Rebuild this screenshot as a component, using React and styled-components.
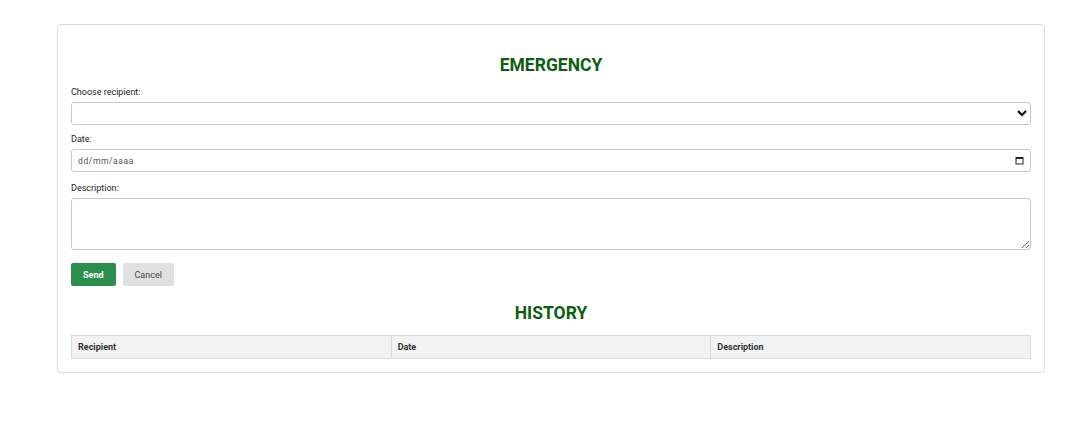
import React from 'react';
import styled, {createGlobalStyle} from 'styled-components';

const GlobalStyle = createGlobalStyle`
    body {
        margin: 0;
        background: #fff;
        font-family: Roboto, 'Liberation Sans', sans-serif;
        color: #222;
    }
`

const Card = styled.div`
    margin: 24px 31px 0 57px;
    padding: 13px;
    border: 1px solid #dcdcdc;
    border-radius: 4px;
    background: #fff;
`

const Title = styled.h2`
    margin: 17px 0 11px;
    font-size: 17.5px;
    line-height: 21px;
    font-weight: 700;
    text-align: center;
    color: #0c5f0e;
`

const Field = styled.div`
    margin-bottom: ${props => props.gap ?? 10}px;
`

const Label = styled.label`
    display: block;
    font-size: 9px;
    line-height: 11px;
    margin-bottom: 4px;
    color: #222;
`

const Select = styled.select`
    display: block;
    width: 100%;
    height: 23px;
    box-sizing: border-box;
    border: 1px solid #c8c8c8;
    border-radius: 3px;
    background: #fff;
    font-family: inherit;
    font-size: 10px;
`

const DateBox = styled.div`
    display: flex;
    align-items: center;
    height: 23px;
    box-sizing: border-box;
    padding: 0 6px;
    border: 1px solid #c8c8c8;
    border-radius: 3px;

    input {
        flex: 1;
        border: none;
        outline: none;
        padding: 0;
        font-family: inherit;
        font-size: 8.5px;
        letter-spacing: 0.6px;
        color: #333;
        background: transparent;
    }
    input::placeholder {
        color: #555;
    }
`

const TextArea = styled.textarea`
    display: block;
    width: 100%;
    height: 52px;
    box-sizing: border-box;
    border: 1px solid #c8c8c8;
    border-radius: 3px;
    font-family: inherit;
    font-size: 10px;
    resize: vertical;
`

const Buttons = styled.div`
    display: flex;
    gap: 7px;
`

const Button = styled.button`
    height: 23px;
    padding: 0 12px;
    border: none;
    border-radius: 2px;
    font-family: inherit;
    font-size: 9px;
    font-weight: ${props => props.primary ? 700 : 400};
    color: ${props => props.primary ? '#fff' : '#444'};
    background: ${props => props.primary ? '#2a8e4c' : '#e0e0e0'};
    cursor: pointer;
`

const Table = styled.table`
    width: 100%;
    border-collapse: collapse;
    table-layout: fixed;

    th {
        height: 23px;
        box-sizing: border-box;
        padding: 0 6px;
        border: 1px solid #dcdcdc;
        background: #f2f2f2;
        font-size: 9px;
        font-weight: 700;
        text-align: left;
        color: #333;
    }
`

const CalendarIcon = () => (
    <svg width="9" height="9" viewBox="0 0 9 9">
        <rect x="1" y="1.5" width="7" height="6.5" fill="none" stroke="#222" strokeWidth="1" />
        <rect x="1" y="1.5" width="7" height="1.5" fill="#222" />
    </svg>
)

const App = () => {
    return (
        <>
            <GlobalStyle />
            <Card>
                <Title>EMERGENCY</Title>
                <Field gap={9}>
                    <Label>Choose recipient:</Label>
                    <Select>
                        <option></option>
                    </Select>
                </Field>
                <Field gap={11}>
                    <Label>Date:</Label>
                    <DateBox>
                        <input type='text' placeholder='dd/mm/aaaa' />
                        <CalendarIcon />
                    </DateBox>
                </Field>
                <Field gap={13}>
                    <Label>Description:</Label>
                    <TextArea />
                </Field>
                <Buttons>
                    <Button primary>Send</Button>
                    <Button>Cancel</Button>
                </Buttons>
                <Title>HISTORY</Title>
                <Table>
                    <thead>
                        <tr>
                            <th>Recipient</th>
                            <th>Date</th>
                            <th>Description</th>
                        </tr>
                    </thead>
                </Table>
            </Card>
        </>
    );
}

export default App;
